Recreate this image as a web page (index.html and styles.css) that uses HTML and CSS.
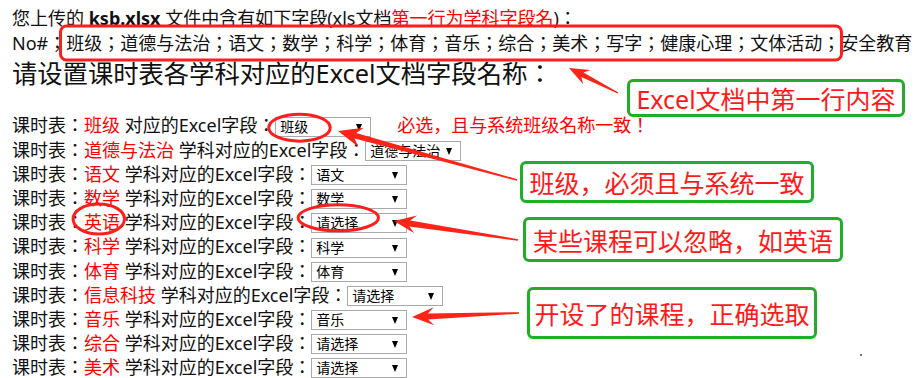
FILE: index.html
```html
<!DOCTYPE html>
<html lang="zh-CN">
<head>
<meta charset="utf-8">
<title>课时表字段设置</title>
<link rel="stylesheet" href="styles.css">
</head>
<body>
<div class="page">
  <p class="line">您上传的 <b>ksb.xlsx</b> 文件中含有如下字段(xls文档<a class="hl">第一行为学科字段名</a>)：</p>
  <p class="line">No#；班级；道德与法治；语文；数学；科学；体育；音乐；综合；美术；写字；健康心理；文体活动；安全教育</p>
  <h2 class="title">请设置课时表各学科对应的Excel文档字段名称：</h2>
  <div class="rows">
    <div class="row">课时表：<span class="subj">班级</span> 对应的Excel字段：<span class="sel"><select><option>班级</option></select></span><span class="note">必选，且与系统班级名称一致！</span></div>
    <div class="row">课时表：<span class="subj">道德与法治</span> 学科对应的Excel字段：<span class="sel"><select><option>道德与法治</option></select></span></div>
    <div class="row">课时表：<span class="subj">语文</span> 学科对应的Excel字段：<span class="sel"><select><option>语文</option></select></span></div>
    <div class="row">课时表：<span class="subj">数学</span> 学科对应的Excel字段：<span class="sel"><select><option>数学</option></select></span></div>
    <div class="row">课时表：<span class="subj">英语</span> 学科对应的Excel字段：<span class="sel"><select><option>请选择</option></select></span></div>
    <div class="row">课时表：<span class="subj">科学</span> 学科对应的Excel字段：<span class="sel"><select><option>科学</option></select></span></div>
    <div class="row">课时表：<span class="subj">体育</span> 学科对应的Excel字段：<span class="sel"><select><option>体育</option></select></span></div>
    <div class="row">课时表：<span class="subj">信息科技</span> 学科对应的Excel字段：<span class="sel"><select><option>请选择</option></select></span></div>
    <div class="row">课时表：<span class="subj">音乐</span> 学科对应的Excel字段：<span class="sel"><select><option>音乐</option></select></span></div>
    <div class="row">课时表：<span class="subj">综合</span> 学科对应的Excel字段：<span class="sel"><select><option>请选择</option></select></span></div>
    <div class="row">课时表：<span class="subj">美术</span> 学科对应的Excel字段：<span class="sel"><select><option>请选择</option></select></span></div>
  </div>

  <svg class="marks" width="920" height="378" viewBox="0 0 920 378">
    <rect class="redline" x="60.5" y="26" width="781" height="34" rx="6" ry="6"/>
    <ellipse class="redline" cx="299.5" cy="127.7" rx="30.7" ry="13.5"/>
    <ellipse class="redline" cx="98.8" cy="219" rx="25.7" ry="15"/>
    <ellipse class="redline" cx="338.3" cy="217.8" rx="40.2" ry="13"/>
    <polygon class="redfill" points="618.3,92.4 583.5,72.6 590.4,70 569,68 583.2,84.2 581.3,77 617.7,93.6"/>
    <polygon class="redfill" points="517.2,179.2 356.2,132.9 363.7,127.7 338,131 358.5,146.9 354.6,138.6 516.8,180.8"/>
    <polygon class="redfill" points="518.1,239.2 410.3,220.4 417.1,215.4 394,221 414.3,233.2 409.3,226.4 517.9,240.8"/>
    <polygon class="redfill" points="519,313.8 428.1,319.4 434.3,325.2 412,317 433.7,307.2 427.9,313.4 519,312.2"/>
    <rect class="dot" x="860" y="354" width="2" height="2"/>
  </svg>
  <div class="callout c1">Excel文档中第一行内容</div>
  <div class="callout c2">班级，必须且与系统一致</div>
  <div class="callout c3">某些课程可以忽略，如英语</div>
  <div class="callout c4">开设了的课程，正确选取</div>
</div>
</body>
</html>
```

FILE: styles.css
```css
html, body {
  margin: 0;
  padding: 0;
  overflow: hidden;
  background: #fff;
}

.page {
  position: relative;
  width: 920px;
  height: 378px;
  padding: 6px 0 0 12px;
  box-sizing: border-box;
  font-family: "Noto Sans", "Noto Sans CJK JP", "Noto Sans CJK SC", sans-serif;
  font-feature-settings: "locl" 0;
  font-size: 18px;
  color: #111;
  overflow: hidden;
}

.line {
  margin: 0;
  height: 25px;
  line-height: 25px;
  white-space: nowrap;
}

.line b {
  font-weight: 700;
}

.hl {
  color: #ff0000;
  text-decoration: underline;
}

.title {
  margin: 0;
  font-size: 25.3px;
  font-weight: 400;
  height: 34px;
  line-height: 34px;
  white-space: nowrap;
}

.rows {
  margin-top: 23.4px;
}

.row {
  height: 24.2px;
  line-height: 24.2px;
  white-space: nowrap;
}

.subj {
  color: #ff0000;
}

.note {
  color: #ff0000;
  margin-left: 26px;
}

.sel {
  position: relative;
  display: inline-block;
  vertical-align: middle;
  width: 96px;
  height: 20px;
  margin-top: -2px;
}

.sel select {
  -webkit-appearance: none;
  appearance: none;
  display: block;
  width: 96px;
  height: 20px;
  box-sizing: border-box;
  margin: 0;
  padding: 0 0 0 4px;
  border: 1px solid #a9a9a9;
  border-radius: 0;
  background: #fff;
  color: #000;
  font-family: "Noto Sans", "Noto Sans CJK JP", "Noto Sans CJK SC", sans-serif;
  font-feature-settings: "locl" 0;
  font-size: 14px;
  line-height: 18px;
}

.sel::after {
  content: "";
  position: absolute;
  right: 9px;
  top: 7px;
  width: 0;
  height: 0;
  border-left: 3.5px solid transparent;
  border-right: 3.5px solid transparent;
  border-top: 7px solid #000;
  pointer-events: none;
}

.marks {
  position: absolute;
  left: 0;
  top: 0;
  pointer-events: none;
}

.redline {
  fill: none;
  stroke: #ff1e1e;
  stroke-width: 3;
}

.redfill {
  fill: #ff2418;
}

.dot {
  fill: #777;
}

.callout {
  position: absolute;
  box-sizing: border-box;
  border: 3px solid #22ac2a;
  border-radius: 6px;
  background: #fff;
  color: #ff1a1a;
  font-size: 25px;
  display: flex;
  align-items: center;
  justify-content: center;
  white-space: nowrap;
}

.c1 { left: 627px; top: 79px; width: 278px; height: 38px; }
.c2 { left: 520px; top: 161px; width: 294px; height: 42px; }
.c3 { left: 523px; top: 217px; width: 320px; height: 45px; }
.c4 { left: 527px; top: 287px; width: 290px; height: 52px; }
```
